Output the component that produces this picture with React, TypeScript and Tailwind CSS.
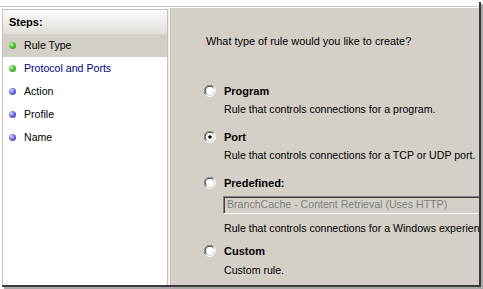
import React from 'react'

const steps = [
  { label: 'Rule Type', done: true, active: true },
  { label: 'Protocol and Ports', done: true, link: true },
  { label: 'Action' },
  { label: 'Profile' },
  { label: 'Name' },
]

function Bullet({ green }: { green?: boolean }) {
  return (
    <span
      className={
        green
          ? 'block size-[7px] shrink-0 rounded-full bg-[radial-gradient(circle_at_35%_35%,#c8f5b0_0%,#4cc43c_45%,#1f8a1f_100%)]'
          : 'block size-[7px] shrink-0 rounded-full bg-[radial-gradient(circle_at_35%_35%,#d6d6ff_0%,#6f6fe0_45%,#2e2e9a_100%)]'
      }
    />
  )
}

function Radio({ checked }: { checked?: boolean }) {
  return (
    <svg width="12" height="12" viewBox="0 0 12 12" className="shrink-0">
      <circle cx="6" cy="6" r="5" fill="#fff" />
      <path d="M1.8 9.8 A5.5 5.5 0 0 1 9.8 1.8" fill="none" stroke="#808080" strokeWidth="1" />
      <path d="M2.6 9 A4.4 4.4 0 0 1 9 2.6" fill="none" stroke="#404040" strokeWidth="1" />
      <path d="M9.8 1.8 A5.5 5.5 0 0 1 1.8 9.8" fill="none" stroke="#ffffff" strokeWidth="1" />
      <path d="M9 2.6 A4.4 4.4 0 0 1 2.6 9" fill="none" stroke="#d4d0c8" strokeWidth="1" />
      {checked && <circle cx="6" cy="6" r="1.8" fill="#000" />}
    </svg>
  )
}

function Option({
  title,
  desc,
  checked,
  descGap = 'mt-[5px]',
  className = '',
  children,
}: {
  title: string
  desc: string
  checked?: boolean
  descGap?: string
  className?: string
  children?: React.ReactNode
}) {
  return (
    <div className={`flex flex-col ${className}`}>
      <div className="flex h-[14px] items-center">
        <div className="flex w-[20px] justify-start">
          <Radio checked={checked} />
        </div>
        <span className="text-[11px] font-bold text-black">{title}</span>
      </div>
      {children}
      <div className={`ml-[20px] h-[12px] whitespace-nowrap leading-[12px] ${descGap}`}>{desc}</div>
    </div>
  )
}

export default function App() {
  return (
    <div className="h-[289px] w-[483px] overflow-hidden bg-white font-[Liberation_Sans,Arial,sans-serif] text-[10.6px] text-black">
      <div className="flex h-[285px] w-[479px] flex-col bg-white shadow-[2px_2px_0_#3a3a3a,4px_4px_0_#a8a8a8]">
        {/* top strip */}
        <div className="h-[6px]" />
        <div className="h-px bg-[#cdc9c1]" />
        <div className="h-px" />

        <div className="flex min-h-0 flex-1">
          {/* Steps panel */}
          <div className="ml-[2px] mt-px flex w-[166px] flex-col border border-b-0 border-[#c6c2ba] bg-white">
            <div className="flex h-[24px] items-center bg-gradient-to-b from-[#fdfbfb] to-[#e2deda] pl-[6px] text-[11px] font-bold">
              Steps:
            </div>
            {steps.map((s) => (
              <div
                key={s.label}
                className={`flex h-[23px] items-center gap-[8px] pl-[6px] ${s.active ? 'bg-[#d4d0c8]' : ''}`}
              >
                <Bullet green={s.done} />
                <span className={s.link ? 'text-[#000080]' : 'text-black'}>{s.label}</span>
              </div>
            ))}
          </div>

          <div className="w-[2px] bg-[#f2f0ec]" />

          {/* Rule type panel */}
          <div className="flex min-w-0 flex-1 flex-col overflow-hidden border-l border-[#c6c2ba] bg-[#d4d0c8] pl-[33px] pt-[27px]">
            <div className="ml-[2px] h-[12px] whitespace-nowrap text-[10.9px] leading-[12px]">
              What type of rule would you like to create?
            </div>

            <div className="mt-[37px] flex flex-col">
              <Option title="Program" desc="Rule that controls connections for a program." />
              <Option className="mt-[15px]" title="Port" checked desc="Rule that controls connections for a TCP or UDP port." />
              <Option
                className="mt-[15px]"
                title="Predefined:"
                descGap="mt-[8px]"
                desc="Rule that controls connections for a Windows experience."
              >
                <div className="ml-[19px] mt-[6px] flex h-[18px] w-[320px] shrink-0 items-center whitespace-nowrap border-b border-l border-t border-b-white border-l-[#808080] border-t-[#808080] bg-[#d4d0c8] pl-[3px] text-[#808080] shadow-[inset_1px_1px_0_#404040]">
                  BranchCache - Content Retrieval (Uses HTTP)
                </div>
              </Option>
              <Option className="mt-[10px]" title="Custom" descGap="mt-[6px]" desc="Custom rule." />
            </div>
          </div>
        </div>
      </div>
    </div>
  )
}
